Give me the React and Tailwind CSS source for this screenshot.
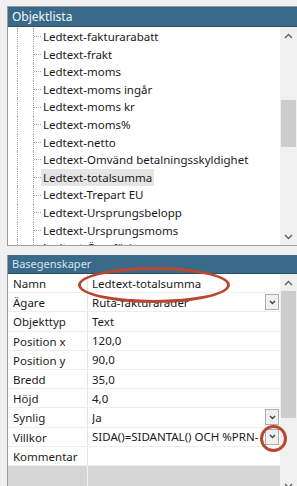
import React from "react";

const items = [
  "Ledtext-fakturarabatt",
  "Ledtext-frakt",
  "Ledtext-moms",
  "Ledtext-moms ingår",
  "Ledtext-moms kr",
  "Ledtext-moms%",
  "Ledtext-netto",
  "Ledtext-Omvänd betalningsskyldighet",
  "Ledtext-totalsumma",
  "Ledtext-Trepart EU",
  "Ledtext-Ursprungsbelopp",
  "Ledtext-Ursprungsmoms",
  "Ledtext-Överföring",
];

const props = [
  { label: "Namn", value: "Ledtext-totalsumma" },
  { label: "Ägare", value: "Ruta-fakturarader", drop: true },
  { label: "Objekttyp", value: "Text" },
  { label: "Position x", value: "120,0" },
  { label: "Position y", value: "90,0" },
  { label: "Bredd", value: "35,0" },
  { label: "Höjd", value: "4,0" },
  { label: "Synlig", value: "Ja", drop: true },
  { label: "Villkor", value: "SIDA()=SIDANTAL() OCH %PRN-", drop: true },
  { label: "Kommentar", value: "" },
];

function Chevron({ up }) {
  return (
    <svg width="9" height="6" viewBox="0 0 9 6">
      <path
        d={up ? "M1 5 L4.5 1.5 L8 5" : "M1 1 L4.5 4.5 L8 1"}
        fill="none"
        stroke="#606060"
        strokeWidth="1.4"
      />
    </svg>
  );
}

function Scrollbar({ thumbTop, thumbHeight }) {
  return (
    <div className="w-[17px] h-full bg-[#f0f0f0] flex flex-col shrink-0">
      <div className="h-[17px] flex items-center justify-center shrink-0">
        <Chevron up />
      </div>
      <div className="flex-1 flex flex-col px-[1px]">
        <div style={{ marginTop: thumbTop, height: thumbHeight }} className="bg-[#cdcdcd] w-full" />
      </div>
      <div className="h-[17px] flex items-center justify-center shrink-0">
        <Chevron />
      </div>
    </div>
  );
}

function DropButton() {
  return (
    <div className="w-[14px] h-[16px] border border-[#adadad] bg-[#f0f0f0] flex items-center justify-center shrink-0 mr-[1px]">
      <svg width="7" height="5" viewBox="0 0 7 5">
        <path d="M1 1 L3.5 3.5 L6 1" fill="none" stroke="#404040" strokeWidth="1.4" />
      </svg>
    </div>
  );
}

export default function App() {
  return (
    <div
      className="w-[297px] h-[486px] bg-[#f0f0f0] overflow-hidden relative pt-[6px] pl-[7px] text-[11.5px] text-[#1a1a1a]"
      style={{ fontFamily: '"Noto Sans", "Open Sans", sans-serif' }}
    >
      {/* Objektlista */}
      <div className="border-l border-t border-[#9a9a9a]">
        <div className="h-[20px] bg-[#3a6a8a] border-b border-[#2c4f66] text-[#f4f8fb] text-[12px] pl-[4px] leading-[19px]">
          Objektlista
        </div>
        <div className="h-[219px] bg-white flex border-b border-[#a0a0a0]">
          <div className="flex-1 overflow-hidden pt-[1px]">
            {items.map((it, i) => (
              <div key={i} className="h-[17.6px] flex pl-[9px]">
                <div className="w-[16px] h-full border-l border-dotted border-[#a8a8a8]" />
                <div className="w-[8px] h-full border-l border-dotted border-[#a8a8a8] flex items-center">
                  <div className="w-full border-t border-dotted border-[#a8a8a8]" />
                </div>
                <div
                  className={`px-[2px] leading-[17.6px] whitespace-nowrap ${
                    it === "Ledtext-totalsumma" ? "bg-[#e5e5e5]" : ""
                  }`}
                >
                  {it}
                </div>
              </div>
            ))}
          </div>
          <Scrollbar thumbTop={56} thumbHeight={47} />
        </div>
      </div>

      {/* Basegenskaper */}
      <div className="mt-[9px] border-l border-[#9a9a9a]">
        <div className="h-[19px] bg-[#3a6a8a] border-b border-[#2c4f66] text-[#d6e2ea] text-[11px] pl-[4px] leading-[18px]">
          Basegenskaper
        </div>
        <div className="h-[220px] bg-white flex">
          <div className="flex-1 flex flex-col">
            {props.map((p) => (
              <div key={p.label} className="h-[19.2px] flex border-b border-[#eeeeee]">
                <div className="w-[80px] border-r border-[#e4e4e4] pl-[5px] leading-[19px] shrink-0">
                  {p.label}
                </div>
                <div className="flex-1 flex items-center pl-[4px] overflow-hidden">
                  <div className="flex-1 whitespace-nowrap overflow-hidden leading-[19px]">{p.value}</div>
                  {p.drop && <DropButton />}
                </div>
              </div>
            ))}
            <div className="flex-1 flex bg-[#d6d6d6]">
              <div className="w-[80px] border-r border-[#f0f0f0]" />
            </div>
          </div>
          <Scrollbar thumbTop={0} thumbHeight={127} />
        </div>
      </div>

      {/* annotations */}
      <div className="absolute left-[78px] top-[267px] w-[152px] h-[36px] rounded-[50%] border-[3px] border-[#b8472f]" />
      <div className="absolute left-[260px] top-[425px] w-[27px] h-[27px] rounded-full border-[3px] border-[#b8472f]" />
    </div>
  );
}
